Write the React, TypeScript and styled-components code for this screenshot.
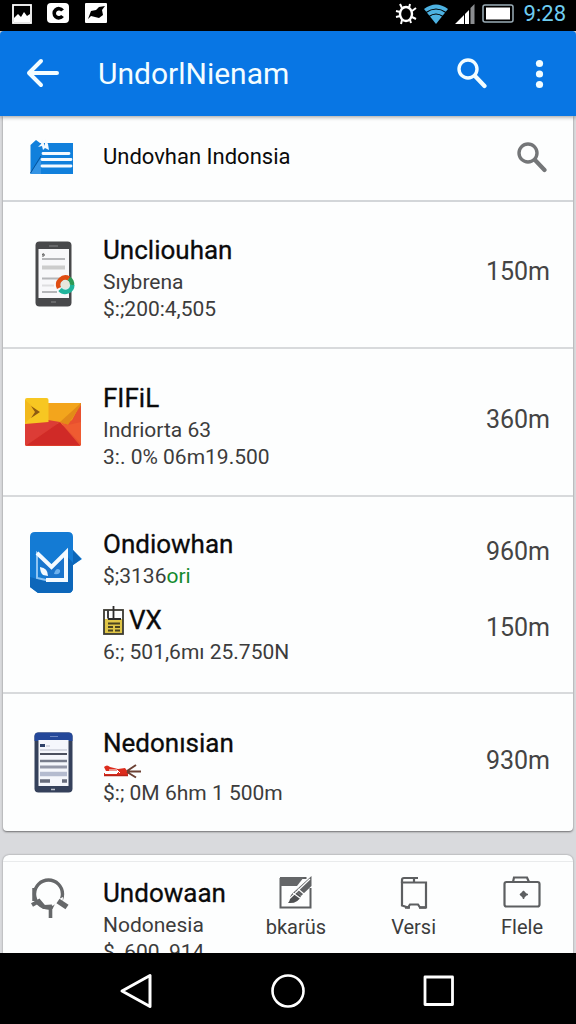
import React from 'react';
import styled, { createGlobalStyle } from 'styled-components';

const GlobalStyle = createGlobalStyle`
  *, *::before, *::after { box-sizing: border-box; }
  body {
    margin: 0;
    background: #d9dadd;
    color: #0b0b0b;
    font-family: Roboto, 'Noto Sans', sans-serif;
  }
  h1, h2, p, ul { margin: 0; padding: 0; font-weight: 400; }
  button { border: 0; padding: 0; background: none; color: inherit; font: inherit; cursor: pointer; }
  svg { display: block; flex: none; }
`;

const Screen = styled.div`
  display: flex;
  flex-direction: column;
  height: 100vh;
  overflow: hidden;
`;

const StatusBar = styled.div`
  flex: none;
  display: flex;
  align-items: center;
  justify-content: space-between;
  height: 31px;
  padding: 0 10px 4px 12px;
  background: #000;
`;

const StatusGroup = styled.div<{ $gap: number }>`
  display: flex;
  align-items: center;
  gap: ${(p) => p.$gap}px;
`;

const Clock = styled.time`
  margin-left: 3px;
  color: #6fcdf0;
  font-size: 22px;
  line-height: 26px;
`;

const AppBar = styled.header`
  position: relative;
  z-index: 1;
  flex: none;
  display: flex;
  align-items: center;
  height: 85px;
  padding: 0 24px;
  border-radius: 4px 4px 0 0;
  background: #0876e4;
  color: #f3fdff;
  box-shadow: 0 1px 4px rgba(0, 0, 0, 0.4);
`;

const AppTitle = styled.h1`
  flex: 1;
  margin-left: 36px;
  font-size: 30px;
  line-height: 40px;
`;

const BarActions = styled.div`
  display: flex;
  align-items: center;
  gap: 40px;
`;

const IconButton = styled.button`
  display: flex;
  align-items: center;
  justify-content: center;
`;

const Content = styled.main`
  flex: 1;
  min-height: 0;
  overflow: hidden;
  padding: 0 3px;
`;

const Card = styled.section`
  margin-bottom: 24px;
  border-radius: 0 0 4px 4px;
  background: #fdfefe;
  box-shadow: 0 1px 2px rgba(0, 0, 0, 0.5);
`;

const CardHeader = styled.div`
  display: grid;
  grid-template-columns: 100px 1fr auto;
  align-items: center;
  height: 86px;
  padding: 0 26px 2px 0;
  border-bottom: 2px solid #d3d6d9;
`;

const CardHeading = styled.h2`
  font-size: 22px;
  line-height: 28px;
`;

const IconCell = styled.div`
  display: flex;
  justify-content: center;
`;

const Rows = styled.ul`
  list-style: none;
`;

const Row = styled.li<{ $top?: boolean }>`
  display: grid;
  grid-template-columns: 100px 1fr;
  align-items: ${(p) => (p.$top ? 'start' : 'center')};
  padding: ${(p) => (p.$top ? '30px 23px 26px 0' : '32px 23px 24px 0')};
  &:first-child { padding-top: 31px; }
  & + & { border-top: 2px solid #d8dadc; }
  ${IconCell} { padding-bottom: 8px; }
`;

const Entries = styled.div`
  display: grid;
  gap: 13px;
`;

const Entry = styled.div<{ $top?: boolean }>`
  display: flex;
  justify-content: space-between;
  align-items: ${(p) => (p.$top ? 'start' : 'center')};
`;

const RowTitle = styled.h2`
  display: flex;
  align-items: center;
  gap: 5px;
  margin-bottom: 2px;
  font-size: 26px;
  line-height: 34px;
  -webkit-text-stroke: 0.3px currentColor;
`;

const Detail = styled.p`
  color: #3c3c3c;
  font-size: 21px;
  line-height: 27px;
`;

const Accent = styled.span`
  color: #138a2c;
`;

const Marker = styled.div`
  height: 18px;
  padding-top: 1px;
`;

const Amount = styled.span`
  padding-bottom: 12px;
  color: #444;
  font-size: 25px;
  line-height: 50px;
  ${Entries} & { padding-bottom: 0; }
`;

const BottomCard = styled(Card)`
  margin-bottom: 0;
  padding-top: 6px;
  border-radius: 6px 6px 0 0;
  box-shadow: 0 0 2px rgba(0, 0, 0, 0.4);
`;

const BottomRow = styled.div`
  display: grid;
  grid-template-columns: 94px 1fr auto;
  column-gap: 6px;
  align-items: start;
  padding: 14px 30px 24px 0;
  border-top: 1px solid #e9ebec;
`;

const Tools = styled.nav`
  display: flex;
  gap: 65px;
`;

const Tool = styled.button`
  display: flex;
  flex-direction: column;
  align-items: center;
  color: #3c3c3c;
  font-size: 20px;
  line-height: 28px;
`;

const ToolIcon = styled.span`
  display: flex;
  height: 37px;
`;

const NavBar = styled.nav`
  position: relative;
  z-index: 1;
  flex: none;
  display: flex;
  align-items: center;
  justify-content: center;
  gap: 115px;
  height: 71px;
  padding-top: 4px;
  background: #000;
`;

const SearchIcon = ({ color }: { color: string }) => (
  <svg width="30" height="31" viewBox="0 0 30 31" fill="none" stroke={color}>
    <circle cx="11" cy="11" r="9" strokeWidth="3.4" />
    <path d="M18 18 L27.5 28" strokeWidth="4.2" strokeLinecap="round" />
  </svg>
);

const PhoneDark = () => (
  <svg width="44" height="66" viewBox="-4 0 44 66">
    <rect x="0.5" y="0.5" width="36" height="65" rx="4" fill="#48494b" />
    <rect x="3.5" y="8" width="30.5" height="49" fill="#f8f8fa" />
    <path d="M14 5h9M16 61h5" stroke="#858789" strokeWidth="1.2" />
    <path d="M7 13.500q3-2 2 1.500M8 13v3" stroke="#555" fill="none" />
    <path d="M7 18h23M7 37.500h18M7 51h15" stroke="#b5b6b9" strokeWidth="2" />
    <path d="M7 26.500h23" stroke="#ccc" strokeWidth="4" />
    <path d="M7 44.500h12" stroke="#dedee0" strokeWidth="2" />
    <circle cx="30.500" cy="44" r="6.500" fill="#d7edf0" />
    <path d="M34 37.500A7.200 7.200 0 0 0 24 47" stroke="#df4d12" strokeWidth="4.500" fill="none" />
    <path d="M34 37.500A7.200 7.200 0 0 1 37 44" stroke="#2c9a55" strokeWidth="4.500" fill="none" />
    <path d="M37.300 44A7 7 0 0 1 25 48.500" stroke="#20b49c" strokeWidth="4.500" fill="none" />
    <circle cx="30.500" cy="43.500" r="4" fill="#e8e6dc" />
  </svg>
);

const PhoneBlue = () => (
  <svg width="39" height="61" viewBox="0 0 39 61">
    <rect x="0.500" y="0.500" width="38" height="60" rx="4" fill="#35415b" />
    <path d="M0.500 9V4.500a4 4 0 0 1 4-4h30a4 4 0 0 1 4 4V9z" fill="#24489a" />
    <rect x="4.500" y="8" width="30" height="46" fill="#f5f7fc" />
    <path d="M16 4.500h8" stroke="#6c87c4" />
    <path d="M17 57.500h4" stroke="#b9becb" strokeWidth="1.500" />
    <path d="M6 13.500h5" stroke="#2e4168" strokeWidth="3" />
    <path d="M12 14h4M6 18h27" stroke="#b8bcc8" strokeWidth="1.200" />
    <path d="M6 22h27" stroke="#4b505e" strokeWidth="2" />
    <path d="M6 29h27" stroke="#777c8b" strokeWidth="2.500" />
    <path d="M6 35h27" stroke="#9498a8" strokeWidth="3" />
    <path d="M6 42h27" stroke="#b4bbcf" strokeWidth="4.500" />
    <path d="M6 49h10M28 49h5" stroke="#686d7c" strokeWidth="3.500" />
  </svg>
);

const FolderIcon = () => (
  <svg width="58" height="50" viewBox="0 0 58 50">
    <path d="M1 6h56v41.500a1.500 1.500 0 0 1-1.500 1.500h-53A1.500 1.500 0 0 1 1 47.500z" fill="#e8502f" />
    <path d="M24 6h33l-9 17-10 6-10-4-27 2v-20z" fill="#f3a51c" />
    <path d="M57 6v2L44 28l-8-3z" fill="#e28b18" />
    <path d="M1 26l23-3 12 2L2 48.500 1 47z" fill="#dc3c36" />
    <path d="M2 48.500L36 25l20 23.500z" fill="#d02a27" />
    <path d="M36 25l21 22V25l-13 3z" fill="#ef5b31" />
    <path d="M1 3a2 2 0 0 1 2-2h19.500a2 2 0 0 1 2 2v22L1 27z" fill="#f7c722" />
    <path d="M1 3l13 11L1 26z" fill="#f2b91d" />
    <path d="M7 9l9 6-9 6 4-6z" fill="#8d5c12" />
  </svg>
);

const DocumentIcon = () => (
  <svg width="46" height="36" viewBox="0 0 46 36">
    <path d="M0.500 6L6 1l4 3h33v31H0.500z" fill="#1180dc" />
    <path d="M0.500 34L11 19v16H0.500z" fill="#3494e5" />
    <path d="M0.500 34L11 17" stroke="#07539c" strokeWidth="1" />
    <path d="M8 8l3-3 1-5 3 7V0l3 5 1 6-4-2-2 2-1-4z" fill="#f4faff" />
    <path d="M13 14.500h26M12 20.500h29M12 27h29" stroke="#f4faff" strokeWidth="2.800" strokeLinecap="round" />
  </svg>
);

const MailIcon = () => (
  <svg width="60" height="72" viewBox="-6 0 60 72">
    <path d="M6 5h33q5 0 5 5v13l9 9-9 6v23q0 5-5 5H9l-8-6V10q0-5 5-5z" fill="#147bd4" />
    <path d="M44 23l8 9-8 6z" fill="#0c66b8" />
    <path d="M1 50l14 4h22V28l7 8v25q0 5-5 5H9l-8-6z" fill="#0d67ba" />
    <path d="M8 27l15 14 14-14v26H18z" fill="#1a74cc" />
    <path d="M8 51V26l14.500 14L37 25.500V53H17z" fill="none" stroke="#8fc4f2" strokeWidth="2" />
    <path d="M8 26l14.500 14L37 25.500V53H17" fill="none" stroke="#f4faff" strokeWidth="4" />
    <path d="M11 40q8 1 8 9l-5-1q-3-3-3-8z" fill="#f4faff" />
    <path d="M25 47q2-7 6-4 1 5-6 4z" fill="#6db1ee" />
  </svg>
);

const TicketIcon = () => (
  <svg width="21" height="29" viewBox="0 0 21 29">
    <rect x="1" y="13" width="19" height="15" fill="#e0c647" />
    <rect x="1" y="4" width="19" height="24" fill="none" stroke="#3b3a32" strokeWidth="1.800" />
    <path d="M10.500 0v13M5 4.500v8M5 13h13" stroke="#2c2c2c" strokeWidth="1.800" fill="none" />
    <path d="M5 17.500h12M5 21h5M12 21h5M5 24.500h5M12 24.500h5" stroke="#4a4320" strokeWidth="2" />
  </svg>
);

const RedTagIcon = () => (
  <svg width="40" height="16" viewBox="0 0 40 16">
    <path d="M1 4q3-3 6 0l8 2 7-1 3 4v4H1v-3h14V8H3z" fill="#dc2c1d" />
    <path d="M6 7h8l3 3M2 10.500h12" stroke="#fff" strokeWidth="1" fill="none" />
    <path d="M1 12.500h24" stroke="#b82318" strokeWidth="1.500" />
    <path d="M24 8l9-6M24 8.500h14M24 9l9 5.500" stroke="#6b4033" strokeWidth="2" fill="none" />
  </svg>
);

const LensIcon = () => (
  <svg width="40" height="44" viewBox="0 0 40 44" fill="none" stroke="#66686a">
    <circle cx="18.500" cy="18" r="14" strokeWidth="3.400" />
    <path d="M22 34L27 24l6-3-1 12z" fill="#fdfefe" stroke="none" />
    <path d="M4 12v13" strokeWidth="3.500" />
    <path d="M2 29l7-4 5 6 8-.5" strokeWidth="4" />
    <path d="M20.500 30v12" strokeWidth="3.600" />
    <path d="M28 25l9 6" strokeWidth="5.500" />
  </svg>
);

const BrushIcon = () => (
  <svg width="34" height="33" viewBox="0 0 34 33">
    <path d="M1.500 2h26M1.500 2v29.500h30V12" fill="none" stroke="#5d5f61" strokeWidth="2" />
    <path d="M1 1h24l-7 9H1z" fill="#646668" />
    <path d="M32.500 0v10L22 20l-6-5z" fill="#606264" />
    <path d="M16 15l6 5q-3 8-13 7 2-2 2-5t5-7z" fill="#4e5052" />
    <path d="M14 17l7 5M19 13l6 5M8 25L31 3" stroke="#fdfefe" strokeWidth="1.200" />
  </svg>
);

const VersionIcon = () => (
  <svg width="28" height="34" viewBox="0 0 28 34" fill="none" stroke="#5d5f61" strokeWidth="2.200">
    <path d="M2 6.500h24v25h-6l-2-3h-8l-2 3-6-2z" />
    <path d="M2 7V4q0-2 2-2h14M14 1v6" />
    <path d="M5 31.500h5M19 31.500h7" strokeWidth="2.600" />
  </svg>
);

const CaseIcon = () => (
  <svg width="38" height="32" viewBox="0 0 38 32" fill="none" stroke="#5d5f61" strokeWidth="2.200">
    <rect x="1.500" y="6" width="35" height="24.500" rx="2" />
    <path d="M10 6l1-4.500h13L26 6" />
    <path d="M16.500 18.500l4-4 4 4-4 4z" fill="#5d5f61" stroke="none" />
    <path d="M17 18.500h8M20.500 15v8" strokeWidth="1.500" />
  </svg>
);

const tools = [
  { label: 'bkarüs', icon: <BrushIcon /> },
  { label: 'Versi', icon: <VersionIcon /> },
  { label: 'Flele', icon: <CaseIcon /> },
];

export default function App() {
  return (
    <Screen>
      <GlobalStyle />
      <StatusBar>
        <StatusGroup $gap={15}>
          <svg width="20" height="20" viewBox="0 0 20 20">
            <rect x="1" y="1" width="18" height="18" fill="#000" stroke="#fff" strokeWidth="1.800" />
            <path d="M2 14l4-4 3 3 3-5 3 4 3-2v8H2z" fill="#fff" />
          </svg>
          <svg width="23" height="21" viewBox="0 0 23 21">
            <rect width="22" height="20" rx="4" fill="#fff" />
            <path d="M15.500 7.500A4.600 4.600 0 1 0 15.500 13" stroke="#000" strokeWidth="3.600" fill="none" />
          </svg>
          <svg width="23" height="21" viewBox="0 0 23 21">
            <rect width="22" height="20" rx="1" fill="#fff" />
            <path d="M3 16l3-8 5-1 3-3 6-1-3 4 1 5-4 3-4-1-4-1z" fill="#000" />
          </svg>
        </StatusGroup>
        <StatusGroup $gap={7}>
          <svg width="22" height="22" viewBox="0 0 22 22" fill="none" stroke="#fff">
            <ellipse cx="11" cy="11" rx="6" ry="7" strokeWidth="2.400" />
            <path d="M5 1l2 4M15 1l-1 4M1 8l4 1M1 14l4-1M17 8l4-3M17 14l4 2M7 17l-1 4M15 17l1 3" strokeWidth="2" />
          </svg>
          <svg width="24" height="20" viewBox="0 0 24 20">
            <path d="M0 5q12-9 24 0L12 20z" fill="#4db2e2" />
            <path d="M2 8.500q10-7 20 0M5 12.500q7-5 14 0" stroke="#000" strokeWidth="1.200" fill="none" />
          </svg>
          <svg width="20" height="20" viewBox="0 0 20 20">
            <path d="M0 20L9 11v9zM10 10l4-4v14h-4z" fill="#fff" />
            <path d="M15.500 4L19.500 0v20h-4z" fill="#8b8d90" />
          </svg>
          <svg width="32" height="19" viewBox="0 0 32 19">
            <rect x="1" y="1" width="30" height="17" rx="2" fill="none" stroke="#9badb7" strokeWidth="1.500" />
            <rect x="4" y="3.500" width="24" height="12" fill="#fff" />
          </svg>
          <Clock>9:28</Clock>
        </StatusGroup>
      </StatusBar>

      <AppBar>
        <IconButton aria-label="Back">
          <svg width="38" height="32" viewBox="0 0 38 32" fill="none" stroke="currentColor" strokeWidth="4" strokeLinecap="round" strokeLinejoin="round">
            <path d="M33 15H5M17 3L5 15l12 12" />
          </svg>
        </IconButton>
        <AppTitle>UndorlNienam</AppTitle>
        <BarActions>
          <IconButton aria-label="Search">
            <SearchIcon color="#f3fdff" />
          </IconButton>
          <IconButton aria-label="More options">
            <svg width="25" height="30" viewBox="0 0 25 30" fill="currentColor">
              <circle cx="12.500" cy="4.500" r="3.600" />
              <circle cx="12.500" cy="15" r="3.600" />
              <circle cx="12.500" cy="25.500" r="3.600" />
            </svg>
          </IconButton>
        </BarActions>
      </AppBar>

      <Content>
        <Card>
          <CardHeader>
            <IconCell><DocumentIcon /></IconCell>
            <CardHeading>Undovhan Indonsia</CardHeading>
            <IconButton aria-label="Search Indonsia">
              <SearchIcon color="#747678" />
            </IconButton>
          </CardHeader>
          <Rows>
            <Row>
              <IconCell><PhoneDark /></IconCell>
              <Entry>
                <div>
                  <RowTitle>Uncliouhan</RowTitle>
                  <Detail>Sıybrena</Detail>
                  <Detail>$:;200:4,505</Detail>
                </div>
                <Amount>150m</Amount>
              </Entry>
            </Row>
            <Row>
              <IconCell><FolderIcon /></IconCell>
              <Entry>
                <div>
                  <RowTitle>FIFiL</RowTitle>
                  <Detail>Indriorta 63</Detail>
                  <Detail>3:. 0% 06m19.500</Detail>
                </div>
                <Amount>360m</Amount>
              </Entry>
            </Row>
            <Row $top>
              <IconCell><MailIcon /></IconCell>
              <Entries>
                <Entry $top>
                  <div>
                    <RowTitle>Ondiowhan</RowTitle>
                    <Detail>$;3136<Accent>ori</Accent></Detail>
                  </div>
                  <Amount>960m</Amount>
                </Entry>
                <Entry $top>
                  <div>
                    <RowTitle><TicketIcon />VX</RowTitle>
                    <Detail>6:; 501,6mı 25.750N</Detail>
                  </div>
                  <Amount>150m</Amount>
                </Entry>
              </Entries>
            </Row>
            <Row>
              <IconCell><PhoneBlue /></IconCell>
              <Entry>
                <div>
                  <RowTitle>Nedonısian</RowTitle>
                  <Marker><RedTagIcon /></Marker>
                  <Detail>$:; 0M 6hm 1 500m</Detail>
                </div>
                <Amount>930m</Amount>
              </Entry>
            </Row>
          </Rows>
        </Card>

        <BottomCard>
          <BottomRow>
            <IconCell><LensIcon /></IconCell>
            <div>
              <RowTitle>Undowaan</RowTitle>
              <Detail>Nodonesia</Detail>
              <Detail>$, 600, 914</Detail>
            </div>
            <Tools aria-label="Tools">
              {tools.map((tool) => (
                <Tool key={tool.label}>
                  <ToolIcon>{tool.icon}</ToolIcon>
                  {tool.label}
                </Tool>
              ))}
            </Tools>
          </BottomRow>
        </BottomCard>
      </Content>

      <NavBar aria-label="System">
        <IconButton aria-label="Back">
          <svg width="36" height="36" viewBox="0 0 36 36" fill="none" stroke="#fff" strokeWidth="3" strokeLinejoin="round">
            <path d="M3 18L31 2.500v31z" />
          </svg>
        </IconButton>
        <IconButton aria-label="Home">
          <svg width="36" height="36" viewBox="0 0 36 36" fill="none" stroke="#fff" strokeWidth="2.600">
            <circle cx="18" cy="18" r="15.500" />
          </svg>
        </IconButton>
        <IconButton aria-label="Recent apps">
          <svg width="36" height="36" viewBox="0 0 36 36" fill="none" stroke="#fff" strokeWidth="2.800" strokeLinejoin="round">
            <rect x="4" y="4" width="27.500" height="27.500" />
          </svg>
        </IconButton>
      </NavBar>
    </Screen>
  );
}
